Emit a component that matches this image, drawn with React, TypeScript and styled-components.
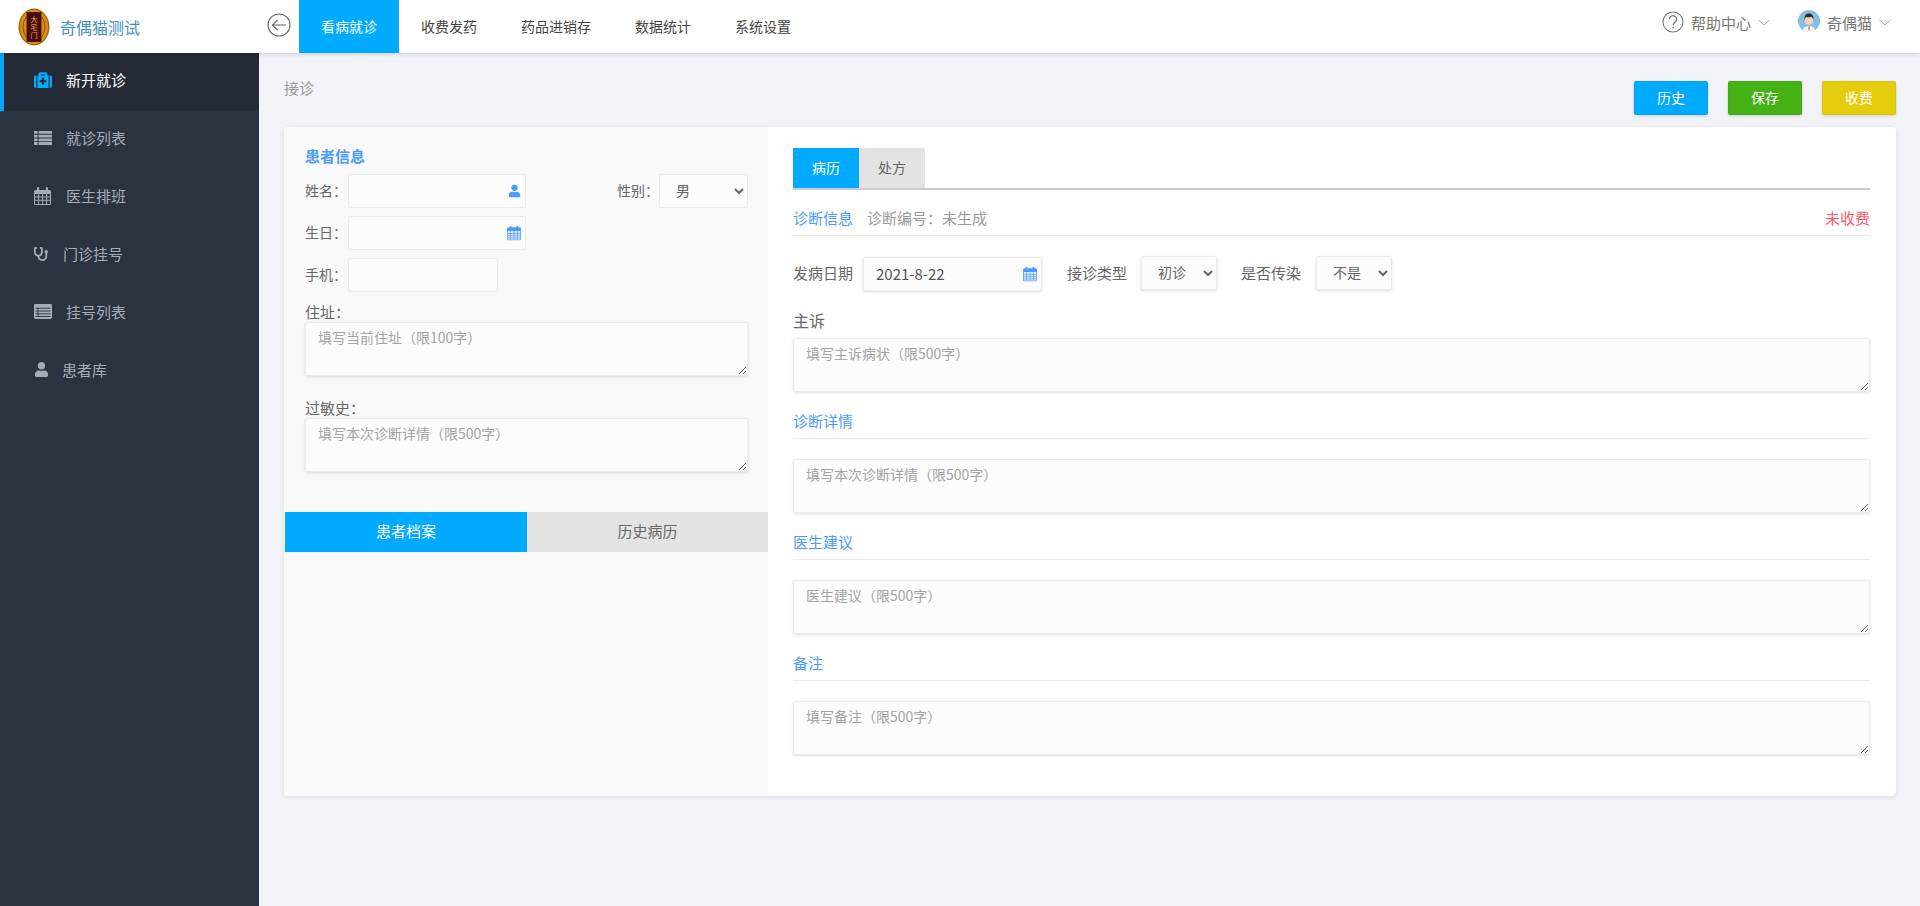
import React from "react";
import styled, { createGlobalStyle } from "styled-components";
import { FaMedkit, FaStethoscope, FaUser } from "react-icons/fa";

const FONT = `"Noto Sans CJK SC", "Liberation Sans", sans-serif`;

const Global = createGlobalStyle`
  html, body { margin: 0; height: 100%; overflow: hidden; }
  body { font-family: ${FONT}; background: #f1f3f8; color: #666; }
  #root { height: 100%; }
  * { box-sizing: border-box; }
  textarea::placeholder, input::placeholder { color: #a3a3a3; opacity: 1; }
`;

const Page = styled.div`
  height: 100%;
  display: flex;
  flex-direction: column;
`;

const Header = styled.header`
  height: 53px;
  flex: none;
  display: flex;
  align-items: stretch;
  background: #fff;
  box-shadow: 0 1px 4px rgba(0, 0, 0, 0.16);
  position: relative;
  z-index: 2;
`;

const Brand = styled.div`
  width: 259px;
  flex: none;
  display: flex;
  align-items: center;
  padding-left: 18px;
  gap: 10px;
  font-size: 16px;
  color: #3f8fc1;
`;

const BackButton = styled.div`
  width: 40px;
  flex: none;
  display: flex;
  align-items: center;
  padding-left: 8px;
  padding-bottom: 3px;
  color: #666;
`;

const TopNav = styled.nav`
  display: flex;
  flex: 1;
`;

const TopNavItem = styled.div<{ $active?: boolean }>`
  padding: 0 22px;
  display: flex;
  align-items: center;
  font-size: 14px;
  padding-bottom: 2px;
  color: ${(p) => (p.$active ? "#fff" : "#444")};
  background: ${(p) => (p.$active ? "#00aaff" : "transparent")};
`;

const HeaderRight = styled.div`
  display: flex;
  align-items: center;
  font-size: 15px;
  color: #777;
  padding-right: 29px;
  padding-bottom: 9px;
`;

const HeaderLink = styled.div<{ $gap: number; $iconGap: number }>`
  display: flex;
  align-items: center;
  margin-left: ${(p) => p.$gap}px;
  gap: ${(p) => p.$iconGap}px;
`;

const AvatarSlot = styled.span`
  display: flex;
  margin-top: -2px;
`;

const Body = styled.div`
  flex: 1;
  display: flex;
  min-height: 0;
`;

const Sidebar = styled.aside`
  width: 259px;
  flex: none;
  background: #2c3340;
`;

const SideItem = styled.div<{ $active?: boolean; $gap: number }>`
  height: 58px;
  display: flex;
  align-items: center;
  padding-left: ${(p) => (p.$active ? 30 : 34)}px;
  padding-bottom: 5px;
  gap: ${(p) => p.$gap}px;
  font-size: 15px;
  color: ${(p) => (p.$active ? "#fff" : "#a5acb9")};
  background: ${(p) => (p.$active ? "#252b36" : "transparent")};
  border-left: ${(p) => (p.$active ? "4px solid #00aaff" : "none")};
  svg {
    color: ${(p) => (p.$active ? "#00aaff" : "#a5acb9")};
    flex: none;
  }
`;

const Main = styled.main`
  flex: 1;
  padding: 28px 24px 0 25px;
  min-width: 0;
`;

const Toolbar = styled.div`
  display: flex;
  justify-content: space-between;
  margin-bottom: 12px;
  height: 34px;
`;

const Crumb = styled.div`
  font-size: 15px;
  color: #999;
  line-height: 14px;
`;

const Actions = styled.div`
  display: flex;
  gap: 20px;
`;

const ActionButton = styled.button<{ $bg: string }>`
  width: 74px;
  height: 34px;
  border: 1px solid rgba(0, 0, 0, 0.03);
  border-radius: 2px;
  background: ${(p) => p.$bg};
  color: #fff;
  font: 14px ${FONT};
  padding: 0 0 2px;
  box-shadow: 0 1px 3px rgba(0, 0, 0, 0.15);
`;

const Card = styled.section`
  display: flex;
  height: 669px;
  background: #fff;
  border-radius: 4px;
  box-shadow: 0 1px 5px rgba(0, 0, 0, 0.1);
  overflow: hidden;
`;

const LeftCol = styled.div`
  width: 484px;
  flex: none;
  background: #f9f9f9;
  padding-top: 20px;
  padding-left: 1px;
`;

const LeftForm = styled.div`
  padding: 0 20px;
`;

const PanelTitle = styled.div`
  font-size: 15px;
  font-weight: 700;
  line-height: 18px;
  height: 20px;
  color: #4a9bff;
  margin-bottom: 7px;
`;

const FormRow = styled.div`
  display: flex;
  align-items: center;
  height: 34px;
  margin-bottom: 8px;
  justify-content: space-between;
`;

const FieldGroup = styled.div`
  display: flex;
  align-items: center;
`;

const RowLabel = styled.label`
  font-size: 14px;
  color: #666;
  width: 43px;
  flex: none;
  padding-bottom: 2px;
`;

const SexLabel = styled(RowLabel)`
  width: 42px;
`;

const InputBox = styled.div<{ $width: number }>`
  position: relative;
  width: ${(p) => p.$width}px;
  height: 34px;
  background: #fcfcfc;
  border: 1px solid #ebebeb;
  border-radius: 2px;
`;

const BareInput = styled.input`
  width: 100%;
  height: 100%;
  border: 0;
  outline: 0;
  background: transparent;
  padding: 0 30px 2px 12px;
  font: 15px ${FONT};
  color: #666;
`;

const InputIcon = styled.span`
  position: absolute;
  right: 4px;
  top: 50%;
  transform: translateY(-50%);
  display: flex;
  color: #4a9bff;
`;

const StackLabel = styled.label<{ $top: number }>`
  display: block;
  font-size: 15px;
  line-height: 19px;
  height: 20px;
  margin-top: ${(p) => p.$top}px;
  color: #666;
`;

const Area = styled.textarea`
  display: block;
  width: 100%;
  height: 54px;
  border: 1px solid #ebebeb;
  border-radius: 2px;
  background: #fcfcfc;
  box-shadow: 0 1px 3px rgba(0, 0, 0, 0.12);
  padding: 4px 12px;
  font: 14px/20px ${FONT};
  color: #666;
  outline: 0;
  margin: 0;
`;

const LeftTabs = styled.div`
  display: flex;
  margin-top: 40px;
`;

const LeftTab = styled.div<{ $active?: boolean; $width: number }>`
  width: ${(p) => p.$width}px;
  height: 40px;
  display: flex;
  align-items: center;
  justify-content: center;
  padding-bottom: 3px;
  font-size: 15px;
  color: ${(p) => (p.$active ? "#fff" : "#666")};
  background: ${(p) => (p.$active ? "#00aaff" : "#e3e3e3")};
`;

const RightCol = styled.div`
  flex: 1;
  min-width: 0;
  padding: 21px 26px 0 25px;
`;

const TabBar = styled.div`
  display: flex;
  height: 42px;
  border-bottom: 2px solid #ccc;
`;

const RightTab = styled.div<{ $active?: boolean }>`
  width: 66px;
  height: 40px;
  display: flex;
  align-items: center;
  justify-content: center;
  padding-bottom: 2px;
  font-size: 14px;
  color: ${(p) => (p.$active ? "#fff" : "#666")};
  background: ${(p) => (p.$active ? "#00aaff" : "#e3e3e3")};
`;

const SectionHead = styled.div<{ $top: number }>`
  display: flex;
  align-items: center;
  justify-content: space-between;
  height: 27px;
  margin-top: ${(p) => p.$top}px;
  padding-bottom: 9px;
  border-bottom: 1px solid #e8e8e8;
  font-size: 15px;
  line-height: 20px;
`;

const SectionTitle = styled.span`
  color: #4a9bff;
`;

const SectionMeta = styled.span`
  color: #999;
  margin-left: 14px;
`;

const Unpaid = styled.span`
  color: #ff5a6a;
`;

const DateRow = styled.div`
  display: flex;
  align-items: flex-start;
  margin-top: 20px;
  height: 34px;
`;

const DateLabel = styled.span<{ $left?: number; $width: number }>`
  font-size: 15px;
  line-height: 34px;
  color: #666;
  width: ${(p) => p.$width}px;
  margin-left: ${(p) => p.$left || 0}px;
  flex: none;
`;

const DateBox = styled(InputBox)`
  margin-top: 1px;
  box-shadow: 0 1px 3px rgba(0, 0, 0, 0.14);
`;

const DateValue = styled(BareInput)`
  color: #555;
`;

const Select = styled.select<{ $width: number; $plain?: boolean }>`
  width: ${(p) => p.$width}px;
  height: 34px;
  margin: 0;
  border: 1px solid #ebebeb;
  border-radius: 2px;
  background: #fcfcfc;
  box-shadow: ${(p) => (p.$plain ? "none" : "0 1px 3px rgba(0, 0, 0, 0.14)")};
  padding: 0 0 2px 12px;
  font: 14px ${FONT};
  color: #666;
  outline: 0;
  flex: none;
`;

const Complaint = styled.div`
  font-size: 16px;
  line-height: 20px;
  color: #666;
  margin-top: 20px;
  margin-bottom: 8px;
`;

const RightArea = styled(Area)`
  margin-top: 0;
`;

const SectionAreaGap = styled.div`
  height: 20px;
`;

function CalendarIcon({ size = 16 }: { size?: number }) {
  return (
    <svg width={size} height={size + 1} viewBox="0 0 16 17" aria-hidden="true">
      <rect x="0.5" y="2.5" width="15" height="14" rx="1" fill="#e4eeff" stroke="currentColor" />
      <rect x="0.5" y="2.5" width="15" height="3.8" fill="currentColor" />
      <rect x="3" y="0.5" width="2.4" height="3.6" rx="1" fill="currentColor" />
      <rect x="10.6" y="0.5" width="2.4" height="3.6" rx="1" fill="currentColor" />
      <path
        d="M4 6.5v9.5M8 6.5v9.5M12 6.5v9.5M1 9h14M1 11.5h14M1 14h14"
        stroke="currentColor"
        strokeWidth="0.8"
        fill="none"
      />
    </svg>
  );
}

function SideCalendar() {
  return (
    <svg width="17" height="18" viewBox="0 0 17 18" aria-hidden="true">
      <path
        fill="currentColor"
        fillRule="evenodd"
        d="M1.5 3H3V1.2a1.1 1.1 0 0 1 2.2 0V3h6.6V1.2a1.1 1.1 0 0 1 2.2 0V3h1.5A1.5 1.5 0 0 1 17 4.5v12a1.5 1.5 0 0 1-1.5 1.5h-14A1.5 1.5 0 0 1 0 16.5v-12A1.5 1.5 0 0 1 1.5 3ZM1 7v2.4h3.1V7Zm4.1 0v2.4h3V7Zm4 0v2.4h3V7Zm4 0v2.4H16V7ZM1 10.4v2.4h3.1v-2.4Zm4.1 0v2.4h3v-2.4Zm4 0v2.4h3v-2.4Zm4 0v2.4H16v-2.4ZM1 13.8V17h3.1v-3.2Zm4.1 0V17h3v-3.2Zm4 0V17h3v-3.2Zm4 0V17H16v-3.2Z"
      />
    </svg>
  );
}

function SideList() {
  return (
    <svg width="18" height="14" viewBox="0 0 18 14" fill="currentColor" aria-hidden="true">
      <path d="M0 0h3.6v2.8H0ZM4.6 0H18v2.8H4.6ZM0 3.7h3.6v2.8H0ZM4.6 3.7H18v2.8H4.6ZM0 7.4h3.6v2.8H0ZM4.6 7.4H18v2.8H4.6ZM0 11.1h3.6v2.9H0ZM4.6 11.1H18v2.9H4.6Z" />
    </svg>
  );
}

function SideListAlt() {
  return (
    <svg width="18" height="15" viewBox="0 0 18 15" aria-hidden="true">
      <rect width="18" height="15" rx="1.4" fill="currentColor" />
      <path d="M1.5 4.2h15M1.5 7h15M1.5 9.8h15M1.5 12.5h15M4 4.2v8.3" stroke="#2c3340" strokeWidth="0.9" fill="none" />
    </svg>
  );
}

function BackIcon() {
  return (
    <svg width="24" height="24" viewBox="0 0 24 24" fill="none" stroke="currentColor" aria-hidden="true">
      <circle cx="12" cy="12" r="11" strokeWidth="1.1" />
      <path d="M19 12H5.5M10.5 7l-5 5 5 5" strokeWidth="1.1" />
    </svg>
  );
}

function HelpIcon() {
  return (
    <svg width="22" height="22" viewBox="0 0 22 22" fill="none" stroke="currentColor" aria-hidden="true">
      <circle cx="11" cy="11" r="10" strokeWidth="1.1" />
      <path d="M7.4 8.3a3.6 3.6 0 1 1 5.6 3c-1.3.9-2 1.4-2 3" strokeWidth="1.3" />
      <circle cx="11" cy="16.6" r="0.9" fill="currentColor" stroke="none" />
    </svg>
  );
}

function Chevron() {
  return (
    <svg width="12" height="7" viewBox="0 0 12 7" fill="none" stroke="#aaa" aria-hidden="true">
      <path d="M0.5 0.8 6 6l5.5-5.2" strokeWidth="1" />
    </svg>
  );
}

function Avatar() {
  return (
    <svg width="22" height="22" viewBox="0 0 22 22" aria-hidden="true">
      <circle cx="11" cy="11" r="11" fill="#86bfdf" />
      <path d="M4.5 22c.5-4.5 3-6 6.5-6s6 1.5 6.5 6Z" fill="#f4f4f4" />
      <path d="M10 16.5h2l-.4 4h-1.2Z" fill="#d9807a" />
      <ellipse cx="11" cy="10" rx="4.2" ry="5" fill="#f4d2b4" />
      <path d="M6.6 10C6 5.5 8.5 3.6 11 3.6s5 1.9 4.4 6.4c-.5-2-1.4-3-2.4-3.2-1.5.6-3.6.6-4.6.3-.9.5-1.4 1.4-1.8 2.9Z" fill="#2f2a28" />
    </svg>
  );
}

function Logo() {
  return (
    <svg width="32" height="38" viewBox="0 0 32 38" aria-hidden="true">
      <ellipse cx="16" cy="19" rx="15.5" ry="18.5" fill="#9a6516" />
      <ellipse cx="16" cy="19" rx="14.2" ry="17.2" fill="#dd8a12" />
      <ellipse cx="16" cy="19" rx="11" ry="14" fill="none" stroke="#8a5410" strokeWidth="1" />
      <rect x="9" y="4.5" width="14" height="29" fill="#4c0a10" stroke="#2a1a0c" strokeWidth="0.8" />
      <text x="16" y="14" fontSize="7" fill="#e8b13a" textAnchor="middle" fontFamily={FONT}>大</text>
      <text x="16" y="22" fontSize="7" fill="#e8b13a" textAnchor="middle" fontFamily={FONT}>宅</text>
      <text x="16" y="30" fontSize="7" fill="#e8b13a" textAnchor="middle" fontFamily={FONT}>门</text>
    </svg>
  );
}

const NAV = ["收费发药", "药品进销存", "数据统计", "系统设置"];

export default function App() {
  return (
    <Page>
      <Global />
      <Header>
        <Brand>
          <Logo />
          奇偶猫测试
        </Brand>
        <BackButton>
          <BackIcon />
        </BackButton>
        <TopNav>
          <TopNavItem $active>看病就诊</TopNavItem>
          {NAV.map((n) => (
            <TopNavItem key={n}>{n}</TopNavItem>
          ))}
        </TopNav>
        <HeaderRight>
          <HeaderLink $gap={0} $iconGap={7}>
            <HelpIcon />
            帮助中心
            <Chevron />
          </HeaderLink>
          <HeaderLink $gap={28} $iconGap={7}>
            <AvatarSlot>
              <Avatar />
            </AvatarSlot>
            奇偶猫
            <Chevron />
          </HeaderLink>
        </HeaderRight>
      </Header>
      <Body>
        <Sidebar>
          <SideItem $active $gap={14}>
            <FaMedkit size={18} />
            新开就诊
          </SideItem>
          <SideItem $gap={14}>
            <SideList />
            就诊列表
          </SideItem>
          <SideItem $gap={15}>
            <SideCalendar />
            医生排班
          </SideItem>
          <SideItem $gap={15}>
            <FaStethoscope size={14} />
            门诊挂号
          </SideItem>
          <SideItem $gap={14}>
            <SideListAlt />
            挂号列表
          </SideItem>
          <SideItem $gap={13}>
            <FaUser size={15} />
            患者库
          </SideItem>
        </Sidebar>
        <Main>
          <Toolbar>
            <Crumb>接诊</Crumb>
            <Actions>
              <ActionButton $bg="#00aaff">历史</ActionButton>
              <ActionButton $bg="#44b215">保存</ActionButton>
              <ActionButton $bg="#e4cc0e">收费</ActionButton>
            </Actions>
          </Toolbar>
          <Card>
            <LeftCol>
              <LeftForm>
                <PanelTitle>患者信息</PanelTitle>
                <FormRow>
                  <FieldGroup>
                    <RowLabel>姓名：</RowLabel>
                    <InputBox $width={178}>
                      <BareInput />
                      <InputIcon>
                        <FaUser size={13} />
                      </InputIcon>
                    </InputBox>
                  </FieldGroup>
                  <FieldGroup>
                    <SexLabel>性别：</SexLabel>
                    <Select $width={89} $plain defaultValue="男">
                      <option>男</option>
                      <option>女</option>
                    </Select>
                  </FieldGroup>
                </FormRow>
                <FormRow>
                  <FieldGroup>
                    <RowLabel>生日：</RowLabel>
                    <InputBox $width={178}>
                      <BareInput />
                      <InputIcon>
                        <CalendarIcon size={14} />
                      </InputIcon>
                    </InputBox>
                  </FieldGroup>
                </FormRow>
                <FormRow>
                  <FieldGroup>
                    <RowLabel>手机：</RowLabel>
                    <InputBox $width={150}>
                      <BareInput />
                    </InputBox>
                  </FieldGroup>
                </FormRow>
                <StackLabel $top={10}>住址：</StackLabel>
                <Area placeholder="填写当前住址（限100字）" />
                <StackLabel $top={22}>过敏史：</StackLabel>
                <Area placeholder="填写本次诊断详情（限500字）" />
              </LeftForm>
              <LeftTabs>
                <LeftTab $active $width={242}>患者档案</LeftTab>
                <LeftTab $width={241}>历史病历</LeftTab>
              </LeftTabs>
            </LeftCol>
            <RightCol>
              <TabBar>
                <RightTab $active>病历</RightTab>
                <RightTab>处方</RightTab>
              </TabBar>
              <SectionHead $top={19}>
                <span>
                  <SectionTitle>诊断信息</SectionTitle>
                  <SectionMeta>诊断编号：未生成</SectionMeta>
                </span>
                <Unpaid>未收费</Unpaid>
              </SectionHead>
              <DateRow>
                <DateLabel $width={70}>发病日期</DateLabel>
                <DateBox $width={179}>
                  <DateValue defaultValue="2021-8-22" />
                  <InputIcon>
                    <CalendarIcon size={14} />
                  </InputIcon>
                </DateBox>
                <DateLabel $left={25} $width={74}>接诊类型</DateLabel>
                <Select $width={76} defaultValue="初诊">
                  <option>初诊</option>
                  <option>复诊</option>
                </Select>
                <DateLabel $left={24} $width={75}>是否传染</DateLabel>
                <Select $width={76} defaultValue="不是">
                  <option>不是</option>
                  <option>是</option>
                </Select>
              </DateRow>
              <Complaint>主诉</Complaint>
              <RightArea placeholder="填写主诉病状（限500字）" />
              <SectionHead $top={20}>
                <SectionTitle>诊断详情</SectionTitle>
              </SectionHead>
              <SectionAreaGap />
              <RightArea placeholder="填写本次诊断详情（限500字）" />
              <SectionHead $top={20}>
                <SectionTitle>医生建议</SectionTitle>
              </SectionHead>
              <SectionAreaGap />
              <RightArea placeholder="医生建议（限500字）" />
              <SectionHead $top={20}>
                <SectionTitle>备注</SectionTitle>
              </SectionHead>
              <SectionAreaGap />
              <RightArea placeholder="填写备注（限500字）" />
            </RightCol>
          </Card>
        </Main>
      </Body>
    </Page>
  );
}
